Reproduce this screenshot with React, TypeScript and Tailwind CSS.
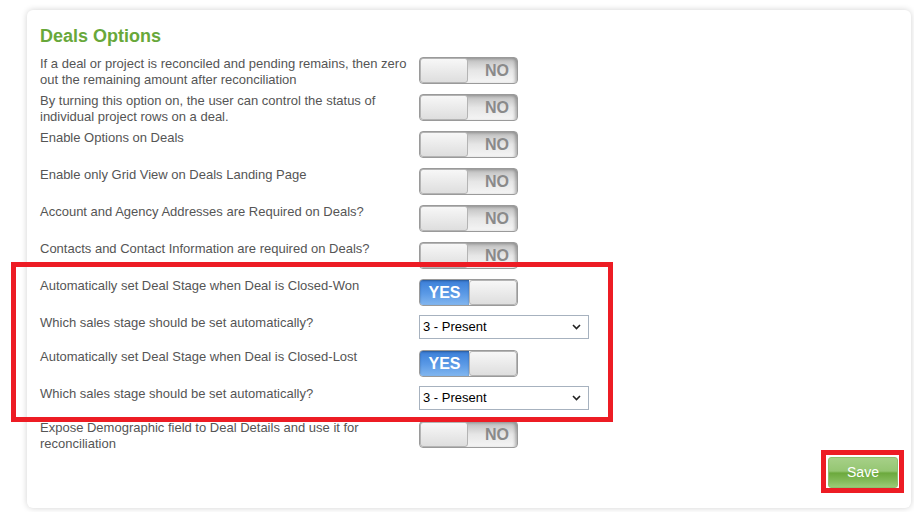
import React from "react";

type Row =
  | { kind: "toggle"; label: string; on: boolean }
  | { kind: "select"; label: string; value: string };

const topRows: Row[] = [
  { kind: "toggle", label: "If a deal or project is reconciled and pending remains, then zero out the remaining amount after reconciliation", on: false },
  { kind: "toggle", label: "By turning this option on, the user can control the status of individual project rows on a deal.", on: false },
  { kind: "toggle", label: "Enable Options on Deals", on: false },
  { kind: "toggle", label: "Enable only Grid View on Deals Landing Page", on: false },
  { kind: "toggle", label: "Account and Agency Addresses are Required on Deals?", on: false },
  { kind: "toggle", label: "Contacts and Contact Information are required on Deals?", on: false },
];

const stageRows: Row[] = [
  { kind: "toggle", label: "Automatically set Deal Stage when Deal is Closed-Won", on: true },
  { kind: "select", label: "Which sales stage should be set automatically?", value: "3 - Present" },
  { kind: "toggle", label: "Automatically set Deal Stage when Deal is Closed-Lost", on: true },
  { kind: "select", label: "Which sales stage should be set automatically?", value: "3 - Present" },
];

const lastRows: Row[] = [
  { kind: "toggle", label: "Expose Demographic field to Deal Details and use it for reconciliation", on: false },
];

function Toggle({ on }: { on: boolean }) {
  const knob = (
    <div className="w-[48px] h-full rounded-[3px] border border-[#b4b4b4] bg-[linear-gradient(to_bottom,#f7f7f7,#dedede)]" />
  );
  if (on) {
    return (
      <div className="mt-px flex h-[27px] w-[99px] overflow-hidden rounded-[4px] border border-[#9a9a9a] bg-[#eee]">
        <div className="flex flex-1 items-center justify-center bg-[linear-gradient(to_bottom,#3a7ed8,#5b9ae6_55%,#82b6ef)] text-[16px] font-bold text-white shadow-[inset_0_1px_2px_rgba(0,0,0,0.3)]">
          YES
        </div>
        {knob}
      </div>
    );
  }
  return (
    <div className="mt-px flex h-[27px] w-[99px] overflow-hidden rounded-[4px] border border-[#9a9a9a] bg-[linear-gradient(to_bottom,#bdbdbd,#e6e6e6_50%,#f5f5f5)] shadow-[inset_-2px_1px_3px_rgba(0,0,0,0.25)]">
      {knob}
      <div className="flex flex-1 items-center justify-end pr-[8px] text-[16px] font-bold text-[#8a8a8a]">NO</div>
    </div>
  );
}

function StageSelect({ value }: { value: string }) {
  return (
    <div className="flex h-[24px] w-[170px] items-center justify-between border border-[#a7b2bf] bg-white pl-[3px] pr-[7px] text-[13px] text-black">
      <span>{value}</span>
      <svg width="9" height="6" viewBox="0 0 9 6" fill="none">
        <path d="M1 1l3.5 3.5L8 1" stroke="#222" strokeWidth="1.6" />
      </svg>
    </div>
  );
}

function OptionRow({ row }: { row: Row }) {
  return (
    <div className="flex items-start">
      <div className="w-[379px] shrink-0 pr-[4px] leading-[16px] text-[#555]">{row.label}</div>
      <div className={row.kind === "toggle" ? "mb-[9px]" : "mb-[10px]"}>
        {row.kind === "toggle" ? <Toggle on={row.on} /> : <StageSelect value={row.value} />}
      </div>
    </div>
  );
}

export default function App() {
  return (
    <div className="min-h-[512px] w-[914px] bg-white pl-[27px] pr-[3px] pt-[10px] font-['Liberation_Sans',Arial,sans-serif] text-[13px]">
      <div className="rounded-[6px] bg-white px-[13px] pb-[20px] pt-[15px] shadow-[0_0_6px_rgba(0,0,0,0.18)]">
        <h1 className="mb-[9px] text-[18px] font-bold leading-[22px] text-[#68a83a]">Deals Options</h1>
        {topRows.map((r, i) => (
          <OptionRow key={i} row={r} />
        ))}
        <div className="relative">
          {stageRows.map((r, i) => (
            <OptionRow key={i} row={r} />
          ))}
          {/* annotation box */}
          <div className="pointer-events-none absolute -left-[29px] -top-[16px] h-[160px] w-[602px] border-[5px] border-[#ed1c24]" />
        </div>
        {lastRows.map((r, i) => (
          <OptionRow key={i} row={r} />
        ))}
        <div className="flex justify-end">
          <div className="relative">
            <button className="h-[31px] w-[70px] rounded-[3px] border border-[#8fbf6d] bg-[linear-gradient(to_bottom,#a6d087,#95c673_45%,#6ca93d_52%,#84bb5b_80%,#9acb76)] text-[14px] text-white">
              Save
            </button>
            <div className="pointer-events-none absolute -bottom-[5px] -left-[7px] -right-[6px] -top-[7px] border-[5px] border-[#ed1c24]" />
          </div>
        </div>
      </div>
    </div>
  );
}
